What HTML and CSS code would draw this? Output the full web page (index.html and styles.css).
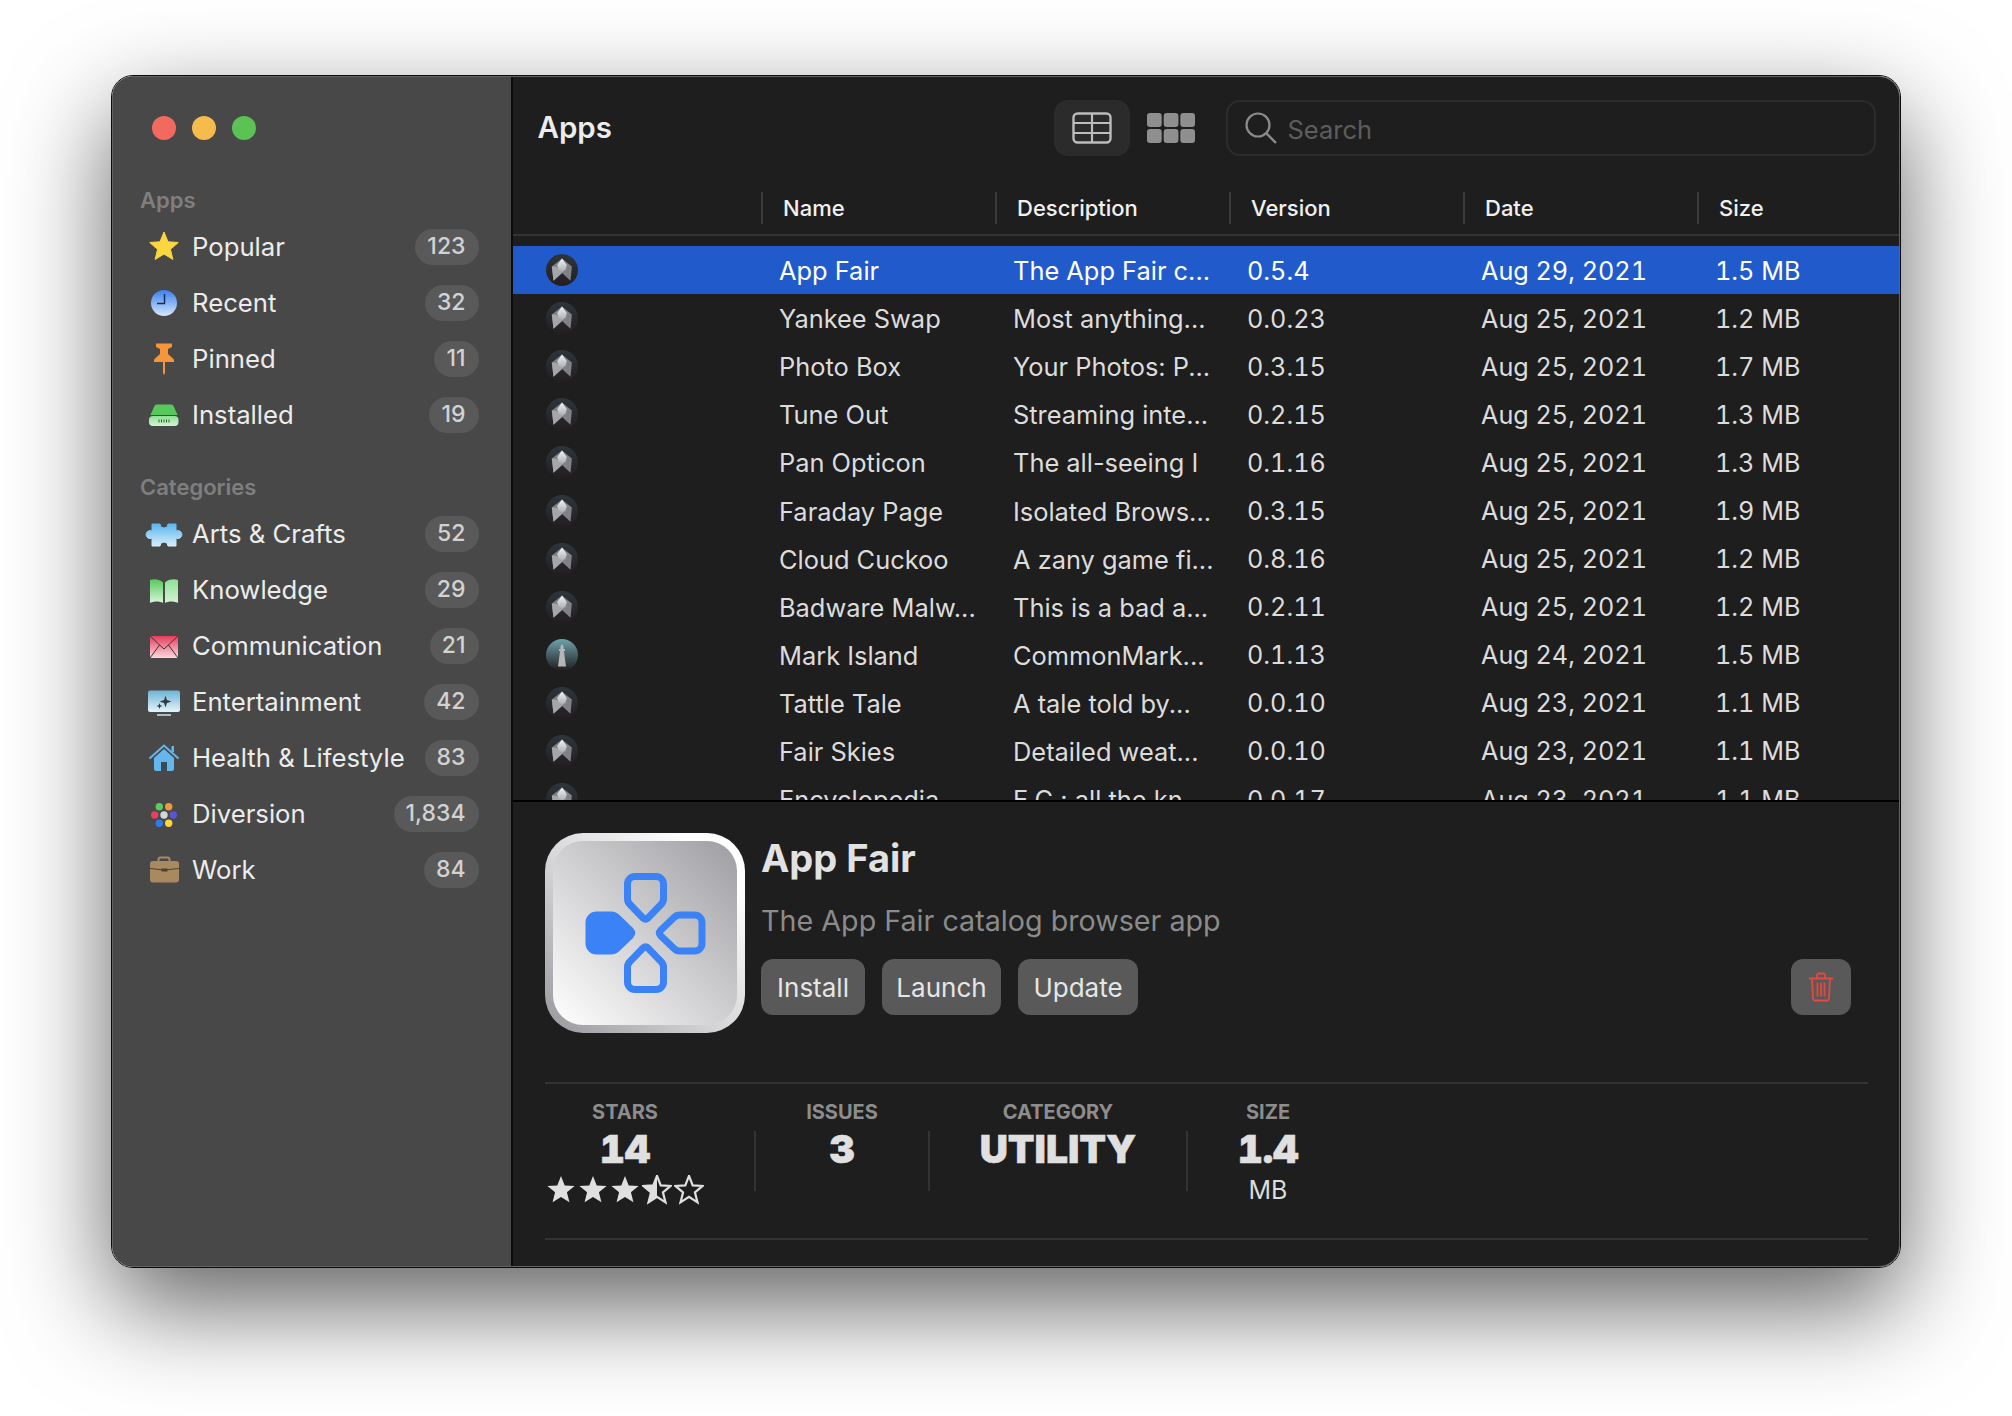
FILE: index.html
```html
<!DOCTYPE html>
<html lang="en">
<head>
<meta charset="utf-8">
<title>App Fair</title>
<link rel="stylesheet" href="styles.css">
</head>
<body>
<svg class="defs" width="0" height="0" aria-hidden="true">
  <defs>
    <linearGradient id="g-clock" x1="0" y1="0" x2="0" y2="1"><stop offset="0" stop-color="#3a80ee"/><stop offset="1" stop-color="#d6e6fb"/></linearGradient>
    <linearGradient id="g-green" x1="0" y1="0" x2="0" y2="1"><stop offset="0" stop-color="#55c95a"/><stop offset="1" stop-color="#d9f5da"/></linearGradient>
    <linearGradient id="g-green2" x1="0" y1="0" x2="0" y2="1"><stop offset="0" stop-color="#8fe093"/><stop offset="1" stop-color="#d3f4d4"/></linearGradient>
    <linearGradient id="g-puzzle" gradientUnits="userSpaceOnUse" x1="0" y1="8" x2="0" y2="34"><stop offset="0" stop-color="#4fb0ee"/><stop offset="1" stop-color="#e2f3fc"/></linearGradient>
    <linearGradient id="g-mail" x1="0" y1="0" x2="0" y2="1"><stop offset="0" stop-color="#e73d5c"/><stop offset="1" stop-color="#fcd9de"/></linearGradient>
    <linearGradient id="g-tv" x1="0" y1="0" x2="0" y2="1"><stop offset="0" stop-color="#6cb4d5"/><stop offset="1" stop-color="#e6f4f9"/></linearGradient>
    <linearGradient id="g-disc" x1="0" y1="0" x2="0" y2="1"><stop offset="0" stop-color="#2c363b"/><stop offset="1" stop-color="#241d21"/></linearGradient>
    <linearGradient id="g-light" x1="0" y1="0" x2="0" y2="1"><stop offset="0" stop-color="#6ea2aa"/><stop offset="1" stop-color="#1f1c1e"/></linearGradient>
    <linearGradient id="g-kite" x1="0" y1="0" x2="0" y2="1"><stop offset="0" stop-color="#f2f6f7"/><stop offset="1" stop-color="#a4a8ac"/></linearGradient>
    <clipPath id="half-star"><rect x="0" y="0" width="20" height="40"/></clipPath>
    <path id="star-shape" d="M20 4 24.200 14.800 35.400 15.400 26.700 22.600 29.600 34 20 27.800 10.400 34 13.300 22.600 4.600 15.400 15.800 14.800Z"/>
    <symbol id="fair-app" viewBox="0 0 32 32">
      <circle cx="16" cy="16" r="16" fill="url(#g-disc)"/>
      <path d="M16 4.500 25.900 12.500 24.500 26.700 16 19 7.500 26.700 5.800 12.500Z" fill="#7f8184"/>
      <path d="M5.800 12.500 11 13 16 19 7.500 26.700Z" fill="#a4a6a9"/>
      <path d="M16 4.500 20.800 11 19.500 15.500 16 18.500 12.500 15.500 11.200 11Z" fill="url(#g-kite)"/>
    </symbol>
    <symbol id="light-app" viewBox="0 0 32 32">
      <circle cx="16" cy="16" r="16" fill="url(#g-light)"/>
      <path d="M16 5 17.500 7V10H19V12H17.900L20 27.500H12L14.100 12H13V10H14.500V7Z" fill="#b4b6b7"/>
    </symbol>
    <path id="dpad-arm" d="M60 13.500H81a7.500 7.500 0 0 1 7.500 7.500V36q0 3-2.500 5.500L73 55q-2.500 2.200-5 0L55 41.500q-2.500-2.500-2.500-5.500V21a7.500 7.500 0 0 1 7.500-7.500Z"/>
  </defs>
</svg>

<div class="page">
  <div class="window">
    <div class="window-inner">
      <aside class="sidebar">
        <div class="lights">
          <span class="light light-close"></span>
          <span class="light light-min"></span>
          <span class="light light-max"></span>
        </div>

        <h2 class="section-title first">Apps</h2>
        <ul class="nav">
          <li class="nav-item">
            <svg class="nav-icon" viewBox="0 0 40 40"><path d="M20 5 24 14.800 34.300 15.500 26.400 22.300 28.900 32.500 20 27 11.100 32.500 13.600 22.300 5.700 15.500 16 14.800Z" fill="#fcd63f" stroke="#fcd63f" stroke-linejoin="round"/></svg>
            <span class="nav-label">Popular</span><span class="badge">123</span>
          </li>
          <li class="nav-item">
            <svg class="nav-icon" viewBox="0 0 40 40"><circle cx="20" cy="20" r="13" fill="url(#g-clock)"/><path d="M20.500 11V20.500H13" fill="none" stroke="#12315f" stroke-width="1.500"/></svg>
            <span class="nav-label">Recent</span><span class="badge">32</span>
          </li>
          <li class="nav-item">
            <svg class="nav-icon" viewBox="0 0 40 40"><path d="M12 4.500h16v3.500l-4 2v5l5 4.500q1.500 1 1 3.500H21v11l-1 2-1-2V23H10q-.5-2.500 1-3.500l5-4.500v-5l-4-2z" fill="#f6953a"/></svg>
            <span class="nav-label">Pinned</span><span class="badge">11</span>
          </li>
          <li class="nav-item">
            <svg class="nav-icon" viewBox="0 0 40 40"><path d="M12.500 9.500H27.500Q29 9.500 29.800 11.500L33.500 20H6.500L10.200 11.500Q11 9.500 12.500 9.500Z" fill="#57c85b"/><rect x="5" y="21" width="29.500" height="10" rx="4" fill="url(#g-green2)"/><path d="M15 24.500v3M17.500 24.500v3M20 24.500v3M22.500 24.500v3M25 24.500v3" stroke="#2f5f33" stroke-width="1"/></svg>
            <span class="nav-label">Installed</span><span class="badge">19</span>
          </li>
        </ul>

        <h2 class="section-title">Categories</h2>
        <ul class="nav">
          <li class="nav-item">
            <svg class="nav-icon" viewBox="0 0 40 40"><path d="M8 10h8a4 4 0 0 0 8 0h8v7a4 4 0 1 1 0 7v8h-8a4 4 0 0 0-8 0H8v-8a4 4 0 1 1 0-7z" fill="url(#g-puzzle)" stroke="url(#g-puzzle)" stroke-width="1" stroke-linejoin="round"/></svg>
            <span class="nav-label">Arts &amp; Crafts</span><span class="badge">52</span>
          </li>
          <li class="nav-item">
            <svg class="nav-icon" viewBox="0 0 40 40"><path d="M19 12.500C15.500 9 9.500 8.500 6 10V33C10 31 15.500 31 19 33Z" fill="url(#g-green)"/><path d="M21 12.500C24.500 9 30.500 8.500 34 10V33C30 31 24.500 31 21 33Z" fill="url(#g-green2)"/></svg>
            <span class="nav-label">Knowledge</span><span class="badge">29</span>
          </li>
          <li class="nav-item">
            <svg class="nav-icon" viewBox="0 0 40 40"><rect x="6" y="10" width="28" height="22" fill="url(#g-mail)"/><path d="M6 10 20 23 34 10M6 32 15.500 19M34 32 24.500 19" fill="none" stroke="#3d3335" stroke-width="1"/></svg>
            <span class="nav-label">Communication</span><span class="badge">21</span>
          </li>
          <li class="nav-item">
            <svg class="nav-icon" viewBox="0 0 40 40"><rect x="4" y="8.500" width="32" height="21.500" rx="2" fill="url(#g-tv)"/><path d="M13 33H27" stroke="#c6e6f3" stroke-width="1.500"/><path d="M21.500 13.500 22.900 18.100 27.500 19.500 22.900 20.900 21.500 25.500 20.100 20.900 15.500 19.500 20.100 18.100ZM15.500 21 16.300 23.200 18.500 24 16.300 24.800 15.500 27 14.700 24.800 12.500 24 14.700 23.200Z" fill="#2f3a40"/></svg>
            <span class="nav-label">Entertainment</span><span class="badge">42</span>
          </li>
          <li class="nav-item">
            <svg class="nav-icon" viewBox="0 0 40 40"><path d="M27.500 8h2.500v6h-2.500z" fill="#63b7ec"/><path d="M5.500 20.500 20 7.500 34.500 20.500" fill="none" stroke="#63b7ec" stroke-width="2"/><path d="M10 20 20 11 30 20V31q0 2-2 2H12q-2 0-2-2z" fill="#63b7ec"/><rect x="17" y="24" width="6" height="9" fill="#3c4a54"/></svg>
            <span class="nav-label">Health &amp; Lifestyle</span><span class="badge">83</span>
          </li>
          <li class="nav-item">
            <svg class="nav-icon" viewBox="0 0 40 40"><circle cx="15.300" cy="12.700" r="3.700" fill="#5bcb5f"/><circle cx="24.700" cy="12.700" r="3.700" fill="#f19a38"/><circle cx="10.700" cy="21" r="3.700" fill="#e8405e"/><circle cx="20" cy="21" r="3.700" fill="#d6d6d6"/><circle cx="29.300" cy="21" r="3.700" fill="#5856d6"/><circle cx="15.300" cy="29.300" r="3.700" fill="#2f7bef"/><circle cx="24.700" cy="29.300" r="3.700" fill="#fcd53f"/></svg>
            <span class="nav-label">Diversion</span><span class="badge">1,834</span>
          </li>
          <li class="nav-item">
            <svg class="nav-icon" viewBox="0 0 40 40"><path d="M14.500 11V9.500q0-2 2-2h7q2 0 2 2V11" fill="none" stroke="#a98a60" stroke-width="2"/><rect x="6" y="11" width="29" height="21.500" rx="3" fill="#a98a60"/><path d="M6 18.500Q20 21.500 35 18.500" fill="none" stroke="#4a4238" stroke-width="1"/><rect x="17.500" y="18.500" width="6" height="3" fill="#4a4238"/></svg>
            <span class="nav-label">Work</span><span class="badge">84</span>
          </li>
        </ul>
      </aside>

      <main class="main">
        <header class="toolbar">
          <h1 class="toolbar-title">Apps</h1>
          <div class="view-switch">
            <button class="view-btn is-active" type="button" aria-label="Table">
              <svg class="table-icon" viewBox="0 0 40 32"><rect x="1.500" y="1.500" width="37" height="29" rx="4" fill="none" stroke="#bcbcbc" stroke-width="2.400"/><path d="M1.500 11H38.500M1.500 21H38.500M20 1.500V30.500" stroke="#bcbcbc" stroke-width="2.200"/></svg>
            </button>
            <button class="view-btn" type="button" aria-label="Grid">
              <svg class="grid-icon" viewBox="0 0 48 30"><rect x="0" y="0" width="14.700" height="14" rx="3"/><rect x="16.700" y="0" width="14.700" height="14" rx="3"/><rect x="33.300" y="0" width="14.700" height="14" rx="3"/><rect x="0" y="16" width="14.700" height="14" rx="3"/><rect x="16.700" y="16" width="14.700" height="14" rx="3"/><rect x="33.300" y="16" width="14.700" height="14" rx="3"/></svg>
            </button>
          </div>
          <div class="search">
            <svg class="search-icon" viewBox="0 0 32 32"><circle cx="13" cy="13" r="11.500" fill="none" stroke="#8b8b8b" stroke-width="2.200"/><path d="M21.500 21.500 31 31" stroke="#8b8b8b" stroke-width="2.400"/></svg>
            <span class="search-text">Search</span>
          </div>
        </header>

        <div class="table-head">
          <span></span>
          <span class="th">Name</span>
          <span class="th">Description</span>
          <span class="th">Version</span>
          <span class="th">Date</span>
          <span class="th">Size</span>
        </div>

        <div class="table-body">
          <div class="row is-selected"><svg class="row-icon"><use href="#fair-app"/></svg><span class="cell">App Fair</span><span class="cell">The App Fair c...</span><span class="cell num">0.5.4</span><span class="cell num">Aug 29, 2021</span><span class="cell num">1.5 MB</span></div>
          <div class="row"><svg class="row-icon"><use href="#fair-app"/></svg><span class="cell">Yankee Swap</span><span class="cell">Most anything...</span><span class="cell num">0.0.23</span><span class="cell num">Aug 25, 2021</span><span class="cell num">1.2 MB</span></div>
          <div class="row"><svg class="row-icon"><use href="#fair-app"/></svg><span class="cell">Photo Box</span><span class="cell">Your Photos: P...</span><span class="cell num">0.3.15</span><span class="cell num">Aug 25, 2021</span><span class="cell num">1.7 MB</span></div>
          <div class="row"><svg class="row-icon"><use href="#fair-app"/></svg><span class="cell">Tune Out</span><span class="cell">Streaming inte...</span><span class="cell num">0.2.15</span><span class="cell num">Aug 25, 2021</span><span class="cell num">1.3 MB</span></div>
          <div class="row"><svg class="row-icon"><use href="#fair-app"/></svg><span class="cell">Pan Opticon</span><span class="cell">The all-seeing I</span><span class="cell num">0.1.16</span><span class="cell num">Aug 25, 2021</span><span class="cell num">1.3 MB</span></div>
          <div class="row"><svg class="row-icon"><use href="#fair-app"/></svg><span class="cell">Faraday Page</span><span class="cell">Isolated Brows...</span><span class="cell num">0.3.15</span><span class="cell num">Aug 25, 2021</span><span class="cell num">1.9 MB</span></div>
          <div class="row"><svg class="row-icon"><use href="#fair-app"/></svg><span class="cell">Cloud Cuckoo</span><span class="cell">A zany game fi...</span><span class="cell num">0.8.16</span><span class="cell num">Aug 25, 2021</span><span class="cell num">1.2 MB</span></div>
          <div class="row"><svg class="row-icon"><use href="#fair-app"/></svg><span class="cell">Badware Malw...</span><span class="cell">This is a bad a...</span><span class="cell num">0.2.11</span><span class="cell num">Aug 25, 2021</span><span class="cell num">1.2 MB</span></div>
          <div class="row"><svg class="row-icon"><use href="#light-app"/></svg><span class="cell">Mark Island</span><span class="cell">CommonMark...</span><span class="cell num">0.1.13</span><span class="cell num">Aug 24, 2021</span><span class="cell num">1.5 MB</span></div>
          <div class="row"><svg class="row-icon"><use href="#fair-app"/></svg><span class="cell">Tattle Tale</span><span class="cell">A tale told by...</span><span class="cell num">0.0.10</span><span class="cell num">Aug 23, 2021</span><span class="cell num">1.1 MB</span></div>
          <div class="row"><svg class="row-icon"><use href="#fair-app"/></svg><span class="cell">Fair Skies</span><span class="cell">Detailed weat...</span><span class="cell num">0.0.10</span><span class="cell num">Aug 23, 2021</span><span class="cell num">1.1 MB</span></div>
          <div class="row"><svg class="row-icon"><use href="#fair-app"/></svg><span class="cell">Encyclopedia</span><span class="cell">E.C.: all the kn...</span><span class="cell num">0.0.17</span><span class="cell num">Aug 23, 2021</span><span class="cell num">1.1 MB</span></div>
        </div>

        <section class="details">
          <div class="summary">
            <div class="app-icon">
              <div class="app-icon-face">
                <svg class="dpad" viewBox="0 0 140 140">
                  <g class="dpad-line">
                    <use href="#dpad-arm"/>
                    <use href="#dpad-arm" transform="rotate(90 70.500 70)"/>
                    <use href="#dpad-arm" transform="rotate(180 70.500 70)"/>
                  </g>
                  <use class="dpad-fill" href="#dpad-arm" transform="rotate(270 70.500 70)"/>
                </svg>
              </div>
            </div>
            <div class="summary-text">
              <h2 class="app-title">App Fair</h2>
              <p class="app-sub">The App Fair catalog browser app</p>
              <div class="actions">
                <button class="btn btn-install" type="button">Install</button>
                <button class="btn btn-launch" type="button">Launch</button>
                <button class="btn btn-update" type="button">Update</button>
                <button class="btn btn-trash" type="button" aria-label="Delete">
                  <svg class="trash-icon" viewBox="0 0 26 30"><path d="M1 6.500H25M9 6.500V3.500Q9 1.500 11 1.500H15Q17 1.500 17 3.500V6.500M4 6.500 5 26.500Q5.200 28.500 7 28.500H19Q20.800 28.500 21 26.500L22 6.500M9.500 10.500V24.500M13 10.500V24.500M16.500 10.500V24.500" fill="none" stroke="#e5483f" stroke-width="1.800"/></svg>
                </button>
              </div>
            </div>
          </div>

          <div class="stats">
            <div class="stat stat-stars">
              <span class="stat-label">STARS</span>
              <span class="stat-value">14</span>
              <div class="stars">
                <svg class="star" viewBox="3 3 34 34"><use href="#star-shape"/></svg>
                <svg class="star" viewBox="3 3 34 34"><use href="#star-shape"/></svg>
                <svg class="star" viewBox="3 3 34 34"><use href="#star-shape"/></svg>
                <svg class="star" viewBox="3 3 34 34"><use class="star-line" href="#star-shape"/><g clip-path="url(#half-star)"><use href="#star-shape"/></g></svg>
                <svg class="star" viewBox="3 3 34 34"><use class="star-line" href="#star-shape"/></svg>
              </div>
            </div>
            <span class="stat-sep"></span>
            <div class="stat stat-issues">
              <span class="stat-label">ISSUES</span>
              <span class="stat-value">3</span>
            </div>
            <span class="stat-sep"></span>
            <div class="stat stat-category">
              <span class="stat-label">CATEGORY</span>
              <span class="stat-value">UTILITY</span>
            </div>
            <span class="stat-sep"></span>
            <div class="stat stat-size">
              <span class="stat-label">SIZE</span>
              <span class="stat-value">1.4</span>
              <span class="stat-unit">MB</span>
            </div>
          </div>
        </section>
      </main>
    </div>
  </div>
</div>
</body>
</html>
```

FILE: styles.css
```css
* { box-sizing: border-box; }

html, body { margin: 0; padding: 0; background: #fff; }

body {
  font-family: "Inter", "Liberation Sans", sans-serif;
  overflow: hidden;
}

.defs { display: block; }

h1, h2, p, ul { margin: 0; padding: 0; }
ul { list-style: none; }

.page {
  width: 2012px;
  height: 1416px;
  padding: 75px 111px 148px;
}

.window {
  height: 1193px;
  border: 1px solid #0c0c0c;
  border-radius: 22px;
  box-shadow: 0 38px 100px rgba(0, 0, 0, .62);
}

.window-inner {
  display: flex;
  height: 100%;
  border: 1px solid #626262;
  border-radius: 21px;
  overflow: hidden;
  background: #1e1e1e;
}

/* Sidebar */
.sidebar {
  flex: 0 0 400px;
  padding-top: 39px;
  background: #484848;
  border-right: 2px solid #0c0c0c;
}

.lights { display: flex; gap: 16px; padding-left: 39px; height: 24px; }
.light { width: 24px; height: 24px; border-radius: 50%; }
.light-close { background: #f2695f; }
.light-min { background: #f6bb4d; }
.light-max { background: #5ac354; }

.section-title {
  height: 30px;
  margin: 29px 0 4px;
  padding-left: 27px;
  font-size: 22px;
  line-height: 30px;
  font-weight: 600;
  color: #7f7f7f;
}
.section-title.first { margin-top: 45px; }

.nav-item {
  display: flex;
  align-items: center;
  height: 56px;
  padding: 0 32px 0 31px;
  font-size: 25.700px;
  color: #ececec;
}
.nav-icon { flex: none; width: 40px; height: 40px; margin-right: 8px; }
.nav-label { flex: 1; padding-bottom: 1px; white-space: nowrap; }

.badge {
  height: 36px;
  padding: 0 13.500px 0 12px;
  border-radius: 18px;
  background: #595959;
  color: #d2d2d2;
  font-size: 23px;
  font-weight: 500;
  line-height: 35px;
}

/* Main */
.main {
  flex: 1;
  min-width: 0;
  display: flex;
  flex-direction: column;
}

.toolbar {
  display: flex;
  align-items: flex-start;
  flex: none;
  height: 79px;
  padding: 23px 23px 0 24.500px;
}
.toolbar-title {
  flex: 1;
  font-size: 29.500px;
  font-weight: 600;
  line-height: 55px;
  color: #ececec;
}

.view-switch { display: flex; gap: 3px; margin-right: 17px; }
.view-btn {
  display: flex;
  align-items: center;
  justify-content: center;
  width: 76px;
  height: 56px;
  padding: 0;
  border: 0;
  border-radius: 14px;
  background: transparent;
}
.view-btn.is-active { background: #2b2b2b; }
.table-icon { width: 40px; height: 32px; }
.grid-icon { width: 48px; height: 30px; fill: #8f8f8f; }

.search {
  display: flex;
  align-items: center;
  width: 650px;
  height: 56px;
  padding-left: 17px;
  border: 2px solid #2c2c2c;
  border-radius: 14px;
}
.search-icon { width: 32px; height: 32px; margin-right: 10.500px; }
.search-text { padding-top: 3px; font-size: 25.500px; color: #5d5d5d; }

/* Table */
.table-head,
.row {
  display: grid;
  grid-template-columns: 248px repeat(4, 234px) 1fr;
}

.table-head {
  flex: none;
  height: 52px;
  margin-top: 28px;
  padding-top: 8px;
  border-bottom: 2px solid #343434;
}
.th {
  height: 32px;
  padding-left: 20px;
  border-left: 2px solid #3a3a3a;
  font-size: 22px;
  font-weight: 500;
  line-height: 32px;
  color: #f0f0f0;
}

.table-body {
  flex: none;
  height: 564px;
  padding-top: 10px;
  overflow: hidden;
}

.row {
  align-items: center;
  height: 48.100px;
  font-size: 25.400px;
  color: #dcdcdc;
}
.row.is-selected { background: #215bcb; color: #fff; }
.row-icon { width: 32px; height: 32px; margin-left: 32.500px; }
.cell { padding: 1px 0 0 18px; white-space: nowrap; }
.num { font-size: 25.200px; font-variant-numeric: tabular-nums; }

/* Details */
.details {
  flex: 1;
  padding: 31px 31px 0 32px;
  border-top: 2px solid #000;
}

.summary { display: flex; gap: 16px; height: 200px; }

.app-icon {
  flex: none;
  width: 200px;
  height: 200px;
  padding: 8px;
  border-radius: 38px;
  background: linear-gradient(45deg, #98979c 0%, #d6d6d8 45%, #ffffff 85%);
}
.app-icon-face {
  display: flex;
  align-items: center;
  justify-content: center;
  height: 100%;
  border-radius: 30px;
  background: linear-gradient(45deg, #ffffff 0%, #cfcfd1 50%, #9e9da2 100%);
}
.dpad { width: 140px; height: 140px; }
.dpad-line { fill: none; stroke: #3b82f6; stroke-width: 7; }
.dpad-fill { fill: #3b82f6; stroke: #3b82f6; stroke-width: 7; }

.summary-text { flex: 1; min-width: 0; padding-right: 17px; }

.app-title {
  font-size: 38px;
  font-weight: 700;
  line-height: 50px;
  color: #e2e2e2;
}
.app-sub {
  margin-top: 18px;
  font-size: 28.700px;
  line-height: 40px;
  color: #8b8b8b;
}

.actions { display: flex; gap: 17px; margin-top: 18px; }

.btn {
  height: 56px;
  padding: 0;
  border: 0;
  border-radius: 12px;
  background: #595959;
  color: #e6e6e6;
  font: 400 26px "Inter", "Liberation Sans", sans-serif;
}
.btn-install { width: 104px; }
.btn-launch { width: 119px; }
.btn-update { width: 120px; }
.btn-trash {
  display: flex;
  align-items: center;
  justify-content: center;
  width: 60px;
  margin-left: auto;
}
.trash-icon { width: 26px; height: 30px; }

.stats {
  display: flex;
  height: 158px;
  margin-top: 49px;
  border-top: 2px solid #333;
  border-bottom: 2px solid #333;
}
.stat {
  display: flex;
  flex-direction: column;
  align-items: center;
  flex: none;
  padding-top: 15px;
}
.stat-stars { width: 209px; padding-right: 49px; }
.stat-issues { width: 172px; }
.stat-category { width: 256px; }
.stat-size { width: 160px; }

.stat-sep {
  flex: none;
  width: 2px;
  height: 60px;
  margin-top: 47px;
  background: #333;
}

.stat-label {
  font-size: 20px;
  font-weight: 700;
  line-height: 26px;
  color: #8d8d8d;
}
.stat-value {
  margin-top: 2px;
  font-size: 39px;
  font-weight: 900;
  font-variant-numeric: tabular-nums;
  line-height: 44px;
  color: #e0e0e0;
  -webkit-text-stroke: .5px #e0e0e0;
}
.stat-unit {
  margin-top: 4px;
  font-size: 25px;
  line-height: 30px;
  color: #dcdcdc;
}

.stars { display: flex; gap: 2px; margin-top: 4px; }
.star { width: 30px; height: 30px; fill: #e0e0e0; }
.star-line { fill: none; stroke: #e0e0e0; stroke-width: 2.500; }
```
